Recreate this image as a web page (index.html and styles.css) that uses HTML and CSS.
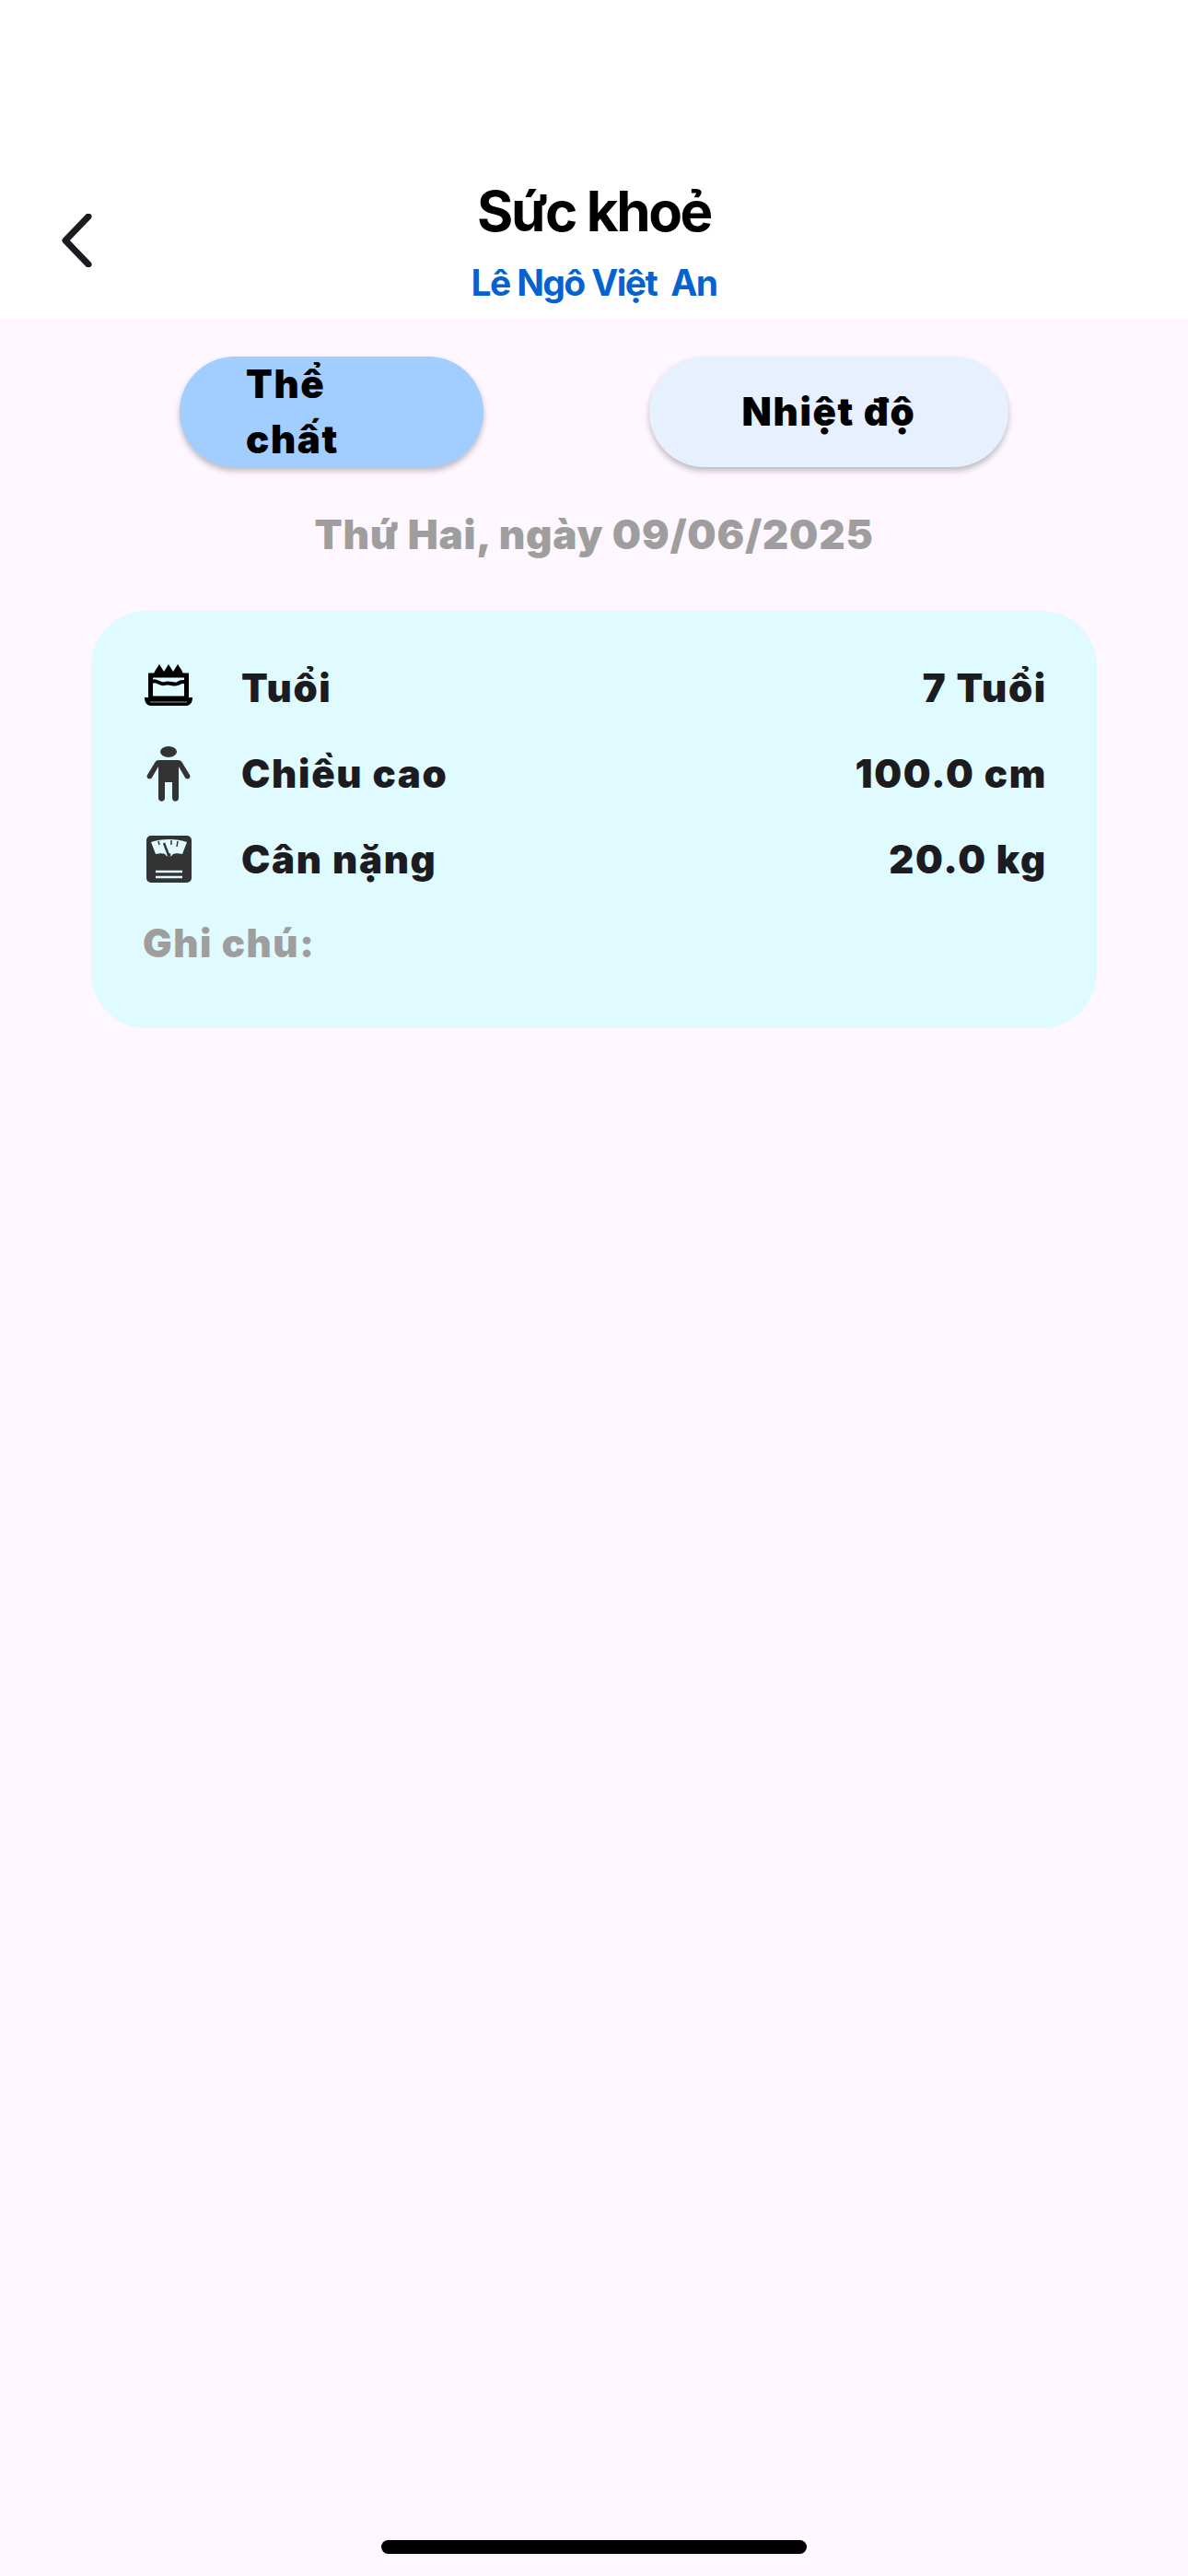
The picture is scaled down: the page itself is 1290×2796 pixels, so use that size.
FILE: index.html
```html
<!DOCTYPE html>
<html lang="vi">
<head>
    <meta charset="UTF-8">
    <meta name="viewport" content="width=device-width, initial-scale=1.0">
    <title>Sức khoẻ</title>
    <link rel="stylesheet" href="styles.css">
</head>
<body>

    <div class="screen">
        <header class="top-bar">
            <svg class="back-icon" width="34" height="58" viewBox="0 0 34 58">
                <path d="M30 3 L5 29 L30 55" fill="none" stroke="#1c1b1f" stroke-width="7" stroke-linecap="round" stroke-linejoin="round"/>
            </svg>
            <h1>Sức khoẻ</h1>
            <p class="child-name">Lê Ngô Việt&nbsp; An</p>
        </header>

        <div class="tabs">
            <button class="tab tab-active"><span>Thể chất</span></button>
            <button class="tab tab-plain"><span>Nhiệt độ</span></button>
        </div>

        <div class="date">Thứ Hai, ngày 09/06/2025</div>

        <section class="card">
            <div class="row">
                <div class="row-icon icon-cake">
                    <svg width="54" height="46" viewBox="0 0 54 46">
                        <!-- cake -->
                        <path d="M10 12 L13 6 L17 0 L22 8 L27 0 L32 8 L37 0 L41 6 L44 12 Z" fill="#000"/>
                        <path d="M7.5 12 H46.5 V37 H7.5 Z" fill="none" stroke="#000" stroke-width="5"/>
                        <path d="M9 19 C14 16 18 23 23 21 C28 19 32 23 37 21 C40 19 43 18 46 20" fill="none" stroke="#000" stroke-width="4"/>
                        <path d="M1 36 H53 C53 42 50 45 46 45 H8 C4 45 1 42 1 36 Z" fill="#000"/>
                        <path d="M7 41 H47" stroke="#5f6a6c" stroke-width="1.5"/>
                    </svg>
                </div>
                <span class="row-label">Tuổi</span>
                <span class="row-value">7 Tuổi</span>
            </div>
            <div class="row">
                <div class="row-icon">
                    <svg width="48" height="60" viewBox="0 0 48 60">
                        <!-- person -->
                        <ellipse cx="24" cy="6" rx="9" ry="6" fill="#333"/>
                        <path d="M14 15 H34 C37 15 38 16 39 18 L47 31 C49 35 44 37 42 34 L35 22 V56 C35 61 28 61 28 56 V39 H20 V56 C20 61 13 61 13 56 V22 L6 34 C4 37 -1 35 1 31 L9 18 C10 16 11 15 14 15 Z" fill="#333"/>
                    </svg>
                </div>
                <span class="row-label">Chiều cao</span>
                <span class="row-value">100.0 cm</span>
            </div>
            <div class="row">
                <div class="row-icon">
                    <svg width="49" height="51" viewBox="0 0 49 51">
                        <!-- scale -->
                        <rect width="49" height="51" rx="5" fill="#333"/>
                        <path d="M5 7 C16 3 33 3 44 7 L39 20 C34 19 31 19 29 20 A5 5 0 0 1 20 20 C18 19 15 19 10 20 Z" fill="#e0fbff"/>
                        <path d="M19 8 L24 21" stroke="#333" stroke-width="2.5"/>
                        <path d="M13 6 L14 10 M27 5 V10 M34 6 L33 12" stroke="#333" stroke-width="1.5"/>
                        <circle cx="24.5" cy="21" r="2" fill="#333"/>
                        <path d="M10 39 H39 M10 45 H39" stroke="#e0fbff" stroke-width="2.5"/>
                    </svg>
                </div>
                <span class="row-label">Cân nặng</span>
                <span class="row-value">20.0 kg</span>
            </div>
            <div class="note">Ghi chú:</div>
        </section>

        <div class="home-bar"></div>
    </div>

</body>
</html>
```

FILE: styles.css
```css
* {
    margin: 0;
    padding: 0;
    box-sizing: border-box;
    font-family: 'Inter', 'Liberation Sans', sans-serif;
}

body {
    background: #fef7ff;
}

.screen {
    display: flex;
    flex-direction: column;
    height: 2796px;
    overflow: hidden;
}

.top-bar {
    position: relative;
    height: 345px;
    padding-top: 193px;
    background: #fff;
    text-align: center;
}

.back-icon {
    position: absolute;
    left: 66px;
    top: 232px;
}

h1 {
    font-size: 60px;
    line-height: 72px;
    font-weight: 700;
    letter-spacing: -2.4px;
    color: #000;
}

.child-name {
    margin-top: 18px;
    font-size: 39px;
    line-height: 48px;
    font-weight: 700;
    letter-spacing: -1.6px;
    color: #0563d0;
}

.tabs {
    display: flex;
    margin-top: 42px;
    padding-left: 195px;
    gap: 180px;
}

.tab {
    height: 120px;
    border: none;
    border-radius: 60px;
    font-size: 42px;
    line-height: 60px;
    font-weight: 900;
    letter-spacing: 1.6px;
    color: #000;
    box-shadow: 0 4px 6px rgba(0, 0, 0, 0.25);
}

.tab-active {
    width: 330px;
    padding: 0 90px 0 72px;
    text-align: left;
    background: #a2cdff;
}

.tab-plain {
    width: 390px;
    background: #e6f0ff;
}

.date {
    margin-top: 50px;
    text-align: center;
    font-size: 44px;
    line-height: 46px;
    font-weight: 900;
    letter-spacing: 0.8px;
    color: #9e9e9e;
}

.card {
    margin: 60px 99px 0;
    height: 453px;
    padding: 37px 54px 0 56px;
    border-radius: 60px;
    background: #e0fbff;
}

.row {
    display: flex;
    align-items: center;
    height: 93px;
    font-size: 42px;
    font-weight: 900;
    letter-spacing: 1.7px;
    color: #1c1b1f;
}

.row-icon {
    display: flex;
    justify-content: center;
    flex: none;
    width: 54px;
    margin: 0 52px 0 1px;
}

.icon-cake {
    margin-bottom: 5px;
}

.row-label {
    flex: 1;
}

.note {
    margin-top: 20px;
    font-size: 42px;
    line-height: 50px;
    font-weight: 900;
    letter-spacing: 1.5px;
    color: #9e9e9e;
}

.home-bar {
    width: 462px;
    height: 15px;
    margin: auto auto 24px;
    border-radius: 8px;
    background: #000;
}
```
